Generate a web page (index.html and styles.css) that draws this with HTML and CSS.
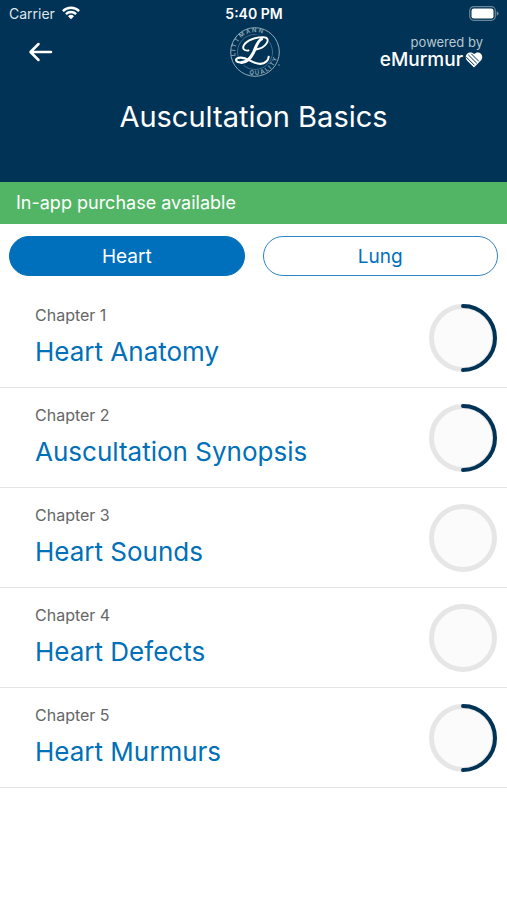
FILE: index.html
```html
<!DOCTYPE html>
<html lang="en">
<head>
<meta charset="utf-8">
<meta name="viewport" content="width=device-width, initial-scale=1">
<title>Auscultation Basics</title>
<link rel="stylesheet" href="styles.css">
</head>
<body>
<header class="header">
  <div class="status">
    <div class="carrier">
      <span>Carrier</span>
      <svg class="wifi" viewBox="0 0 18 14" aria-hidden="true"><g fill="none" stroke="currentColor" stroke-width="2.3"><path d="M.9 5.1a11.5 11.5 0 0 1 16.2 0"/><path d="M3.9 8.1a7.2 7.2 0 0 1 10.2 0"/></g><path d="M6 10.2a4.3 4.3 0 0 1 6 0L9 13.3z" fill="currentColor"/></svg>
    </div>
    <span class="clock">5:40 PM</span>
    <svg class="battery" viewBox="0 0 30 15" aria-hidden="true"><rect x=".7" y=".7" width="25.6" height="13.6" rx="4" fill="none" stroke="#6c859a" stroke-width="1.2"/><rect x="2.5" y="2.5" width="22" height="10" rx="2.3" fill="#fff"/><path d="M27.6 5.2q2 .5 2 2.3t-2 2.3z" fill="#6c859a"/></svg>
  </div>
  <div class="brandbar">
    <button class="back" type="button" aria-label="Back">
      <svg viewBox="0 0 24 20" aria-hidden="true"><path d="M10 2 2 10l8 8M2.5 10H22.5" fill="none" stroke="currentColor" stroke-width="2.5" stroke-linecap="round" stroke-linejoin="round"/></svg>
    </button>
    <svg class="seal" viewBox="0 0 52 52" role="img" aria-label="Littmann Quality">
      <defs>
        <path id="arc-top" d="M6.6 30A19.8 19.8 0 0 1 45.400 22"/>
        <path id="arc-bottom" d="M20 48.200A23 23 0 0 0 48.500 21"/>
      </defs>
      <circle cx="26" cy="26" r="24.3" fill="none" stroke="#91a9ba" stroke-width="1"/>
      <circle cx="26" cy="26" r="17.5" fill="none" stroke="#56799a" stroke-width=".8"/>
      <text class="seal-text"><textPath href="#arc-top">L I T T M A N N</textPath></text>
      <text class="seal-text"><textPath href="#arc-bottom">Q U A L I T Y</textPath></text>
      <g fill="none" stroke="#003355" stroke-width="5" stroke-linecap="round" stroke-linejoin="round"><path d="M19 24c-7-2-4-8 1-10.500C26 10.500 38 9 38 13.500c0 4-5 8-11 9.500"/><path d="M8 35c3 4 9 2 12-3 5 3 16 9 20-3"/></g>
      <g fill="none" stroke="#fff" stroke-linecap="round" stroke-linejoin="round">
        <path stroke-width="1.900" d="M19.500 24.500c-4.500.6-6.500-2.200-4.500-5.500C18 14 27 11.200 34 11.300c4.800 0 5.800 2.700 3.500 6.200-2.200 3.300-6 5.300-10.500 6"/>
        <path stroke-width="3" d="M32.500 13c-4.500 2.500-5.500 8.500-8 13.500-2.600 5.200-6.500 9.800-12 10"/>
        <path stroke-width="2.100" d="M12.500 36.500c-6.500.4-7.500-4.500-1.500-4.900 7.500-.4 13.500 6.600 20.500 6.300 4.500-.2 8-3.500 8.200-7.200"/>
      </g>
      <circle cx="50" cy="39" r=".7" fill="#91a9ba"/>
    </svg>
    <div class="powered">
      <span class="powered-by">powered by</span>
      <span class="emurmur">eMurmur<svg class="heart" viewBox="0 0 18 16" aria-hidden="true"><path d="M9 15.500 2 8.600C-1 4.500 2 .5 5.500.5c1.500 0 2.700.6 3.700 1.600C10.500.8 12 .3 13.500.6c3.700.8 5 4.900 2.400 8z" fill="#fff"/><path d="m1.500 5.300 7.700 7.700M3.600 3.200 11.500 11M6.500 2l7 7" fill="none" stroke="#003355" stroke-width="1" stroke-linecap="round"/></svg></span>
    </div>
  </div>
  <h1 class="title">Auscultation Basics</h1>
</header>
<a class="banner" href="#purchase">In-app purchase available</a>
<main>
  <nav class="tabs" aria-label="Organ">
    <button class="tab tab-active" type="button" aria-pressed="true">Heart</button>
    <button class="tab" type="button" aria-pressed="false">Lung</button>
  </nav>
  <ul class="chapters">
    <li><a class="chapter" href="#chapter-1">
      <span class="chapter-text"><span class="number">Chapter 1</span><span class="name">Heart Anatomy</span></span>
      <svg class="ring" viewBox="0 0 68 68" aria-hidden="true"><circle class="track" cx="34" cy="34" r="31.5"/><path class="done" d="M34 2a32 32 0 0 1 0 64"/></svg>
    </a></li>
    <li><a class="chapter" href="#chapter-2">
      <span class="chapter-text"><span class="number">Chapter 2</span><span class="name">Auscultation Synopsis</span></span>
      <svg class="ring" viewBox="0 0 68 68" aria-hidden="true"><circle class="track" cx="34" cy="34" r="31.5"/><path class="done" d="M34 2a32 32 0 0 1 0 64"/></svg>
    </a></li>
    <li><a class="chapter" href="#chapter-3">
      <span class="chapter-text"><span class="number">Chapter 3</span><span class="name">Heart Sounds</span></span>
      <svg class="ring" viewBox="0 0 68 68" aria-hidden="true"><circle class="track" cx="34" cy="34" r="31.5"/></svg>
    </a></li>
    <li><a class="chapter" href="#chapter-4">
      <span class="chapter-text"><span class="number">Chapter 4</span><span class="name">Heart Defects</span></span>
      <svg class="ring" viewBox="0 0 68 68" aria-hidden="true"><circle class="track" cx="34" cy="34" r="31.5"/></svg>
    </a></li>
    <li><a class="chapter" href="#chapter-5">
      <span class="chapter-text"><span class="number">Chapter 5</span><span class="name">Heart Murmurs</span></span>
      <svg class="ring" viewBox="0 0 68 68" aria-hidden="true"><circle class="track" cx="34" cy="34" r="31.5"/><path class="done" d="M34 2a32 32 0 0 1 0 64"/></svg>
    </a></li>
  </ul>
</main>
</body>
</html>
```
FILE: styles.css
```css
* { box-sizing: border-box; }
body {
  margin: 0;
  background: #fff;
  font-family: Inter, "Liberation Sans", sans-serif;
}
svg { display: block; }
a { text-decoration: none; }
button { font: inherit; cursor: pointer; }

.header {
  background: #003355;
  color: #fff;
  padding-bottom: 48px;
}
.status {
  display: grid;
  grid-template-columns: 1fr auto 1fr;
  align-items: center;
  height: 26px;
  padding: 0 8px 0 9px;
  font-size: 14px;
}
.carrier {
  display: flex;
  align-items: center;
  gap: 7px;
  color: #dfe6eb;
}
.wifi { width: 18px; height: 14px; color: #fff; }
.clock { font-weight: 600; }
.battery { width: 30px; height: 15px; justify-self: end; }

.brandbar {
  display: grid;
  grid-template-columns: 1fr auto 1fr;
  align-items: center;
  height: 52px;
  padding: 0 24px 0 26px;
}
.back {
  justify-self: start;
  padding: 0 2px;
  border: 0;
  background: none;
  color: #fff;
}
.back svg { width: 25px; height: 20px; }
.seal { width: 52px; height: 52px; }
.seal-text {
  fill: #91a9ba;
  font-size: 6px;
  font-weight: 600;
}
.powered {
  display: flex;
  flex-direction: column;
  align-items: flex-end;
}
.powered-by { font-size: 13px; line-height: 16px; color: #b9c7d2; }
.emurmur {
  display: flex;
  align-items: center;
  gap: 2px;
  font-size: 19px;
  line-height: 20px;
  font-weight: 500;
}
.heart { width: 18px; height: 16px; }
.title {
  margin: 22px 0 0;
  font-size: 29px;
  line-height: 34px;
  font-weight: 400;
  text-align: center;
}
.banner {
  display: block;
  padding: 0 16px;
  background: #52b565;
  color: #fff;
  font-size: 18px;
  line-height: 42px;
}
.tabs {
  display: flex;
  gap: 18px;
  padding: 12px 9px;
}
.tab {
  flex: 1;
  height: 40px;
  padding: 0;
  border: 1px solid #2d82c5;
  border-radius: 20px;
  background: #fff;
  color: #0070bd;
  font-size: 19px;
}
.tab-active {
  border-color: #0070bd;
  background: #0070bd;
  color: #fff;
}
.chapters {
  margin: 0;
  padding: 0;
  list-style: none;
}
.chapter {
  display: flex;
  align-items: center;
  justify-content: space-between;
  padding: 16px 10px 15px 35px;
  border-bottom: 1px solid #e4e4e4;
}
.chapter-text {
  display: flex;
  flex-direction: column;
  gap: 10px;
  padding-bottom: 2px;
}
.number {
  color: #666;
  font-size: 16px;
  line-height: 20px;
}
.name {
  color: #0070b8;
  font-size: 26px;
  line-height: 34px;
}
.ring { width: 68px; height: 68px; }
.track { fill: #fbfbfb; stroke: #e6e6e6; stroke-width: 5; }
.done { fill: none; stroke: #003355; stroke-width: 4; stroke-linecap: round; }
```
